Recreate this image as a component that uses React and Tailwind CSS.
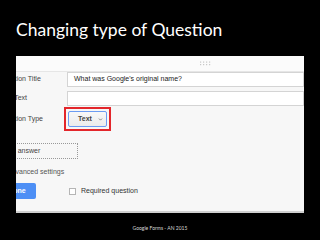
import { ChevronDown } from 'lucide-react'

const ui = { fontFamily: '"Liberation Sans", Arial, sans-serif' }

const DragHandle = () => (
  <svg width="12" height="5" viewBox="0 0 12 5" className="text-[#c8c8c8]">
    {[0, 3, 6, 9].map(x => (
      <g key={x} fill="currentColor">
        <rect x={x + 1} y="0.5" width="1.2" height="1.2" />
        <rect x={x + 1} y="3" width="1.2" height="1.2" />
      </g>
    ))}
  </svg>
)

const Row = ({ label, children, className = '' }) => (
  <div className={`flex items-center ${className}`}>
    <div className="w-[69px] shrink-0 text-[7px] text-[#444]">{label}</div>
    {children}
  </div>
)

const QuestionEditor = () => (
  <div className="flex h-[157px] w-[288px] flex-col overflow-hidden border-b-2 border-[#cfcfcf] bg-[#f7f7f7]" style={ui}>
    <div className="flex h-[16px] shrink-0 items-center border-b border-[#e6e6e6] bg-[#fbfbfb] pl-[183px]">
      <DragHandle />
    </div>

    <div className="ml-[-18px] flex flex-col">
      <Row label="Question Title">
        <div className="flex h-[15px] flex-1 items-center border border-[#d4d4d4] bg-white pl-[6px] text-[7px] text-[#222]">
          What was Google's original name?
        </div>
      </Row>

      <Row label="Help Text" className="mt-[4px]">
        <div className="h-[15px] flex-1 border border-[#d4d4d4] bg-white" />
      </Row>

      <Row label="Question Type" className="mt-[1px]">
        <div className="ml-[-3px] border-2 border-[#e3262b] p-[2px]">
          <div className="flex h-[16px] w-[39px] items-center justify-between rounded-[2px] border border-[#6c9cf2] bg-gradient-to-b from-[#f8f8f8] to-[#ececec] pl-[9px] pr-[3px] text-[7px] font-bold text-[#444]">
            <span>Text</span>
            <ChevronDown className="h-[5px] w-[5px] text-[#777]" strokeWidth={4} />
          </div>
        </div>
      </Row>

      <div className="mt-[12px] ml-[-4px] flex h-[16px] w-[84px] items-center border border-dotted border-[#999] pl-[4px] text-[7px] text-[#444]">
        Short answer
      </div>

      <div className="mt-[9px] ml-[9px] text-[7px] leading-[8px] text-[#555]">Advanced settings</div>

      <div className="mt-[7px] flex items-center">
        <div className="flex h-[16px] w-[38px] items-center justify-center rounded-[2px] bg-[#4d8ff5] text-[7px] font-bold text-white">
          Done
        </div>
        <div className="ml-[33px] h-[7px] w-[7px] border border-[#b5b5b5] bg-white" />
        <span className="ml-[5px] text-[7px] text-[#333]">Required question</span>
      </div>
    </div>
  </div>
)

export default function App() {
  return (
    <div className="flex h-[240px] w-[320px] flex-col bg-black">
      <h1
        className="mt-[19px] h-[37px] pl-[16px] text-[17.5px] leading-[22px] text-white"
        style={{ fontFamily: 'Lato, "Open Sans", sans-serif' }}
      >
        Changing type of Question
      </h1>
      <div className="pl-[16px]">
        <QuestionEditor />
      </div>
      <div
        className="mt-[12px] text-center text-[5px] text-[#d8d8d8]"
        style={{ fontFamily: 'Lato, "Open Sans", sans-serif' }}
      >
        Google Forms - AN 2015
      </div>
    </div>
  )
}
